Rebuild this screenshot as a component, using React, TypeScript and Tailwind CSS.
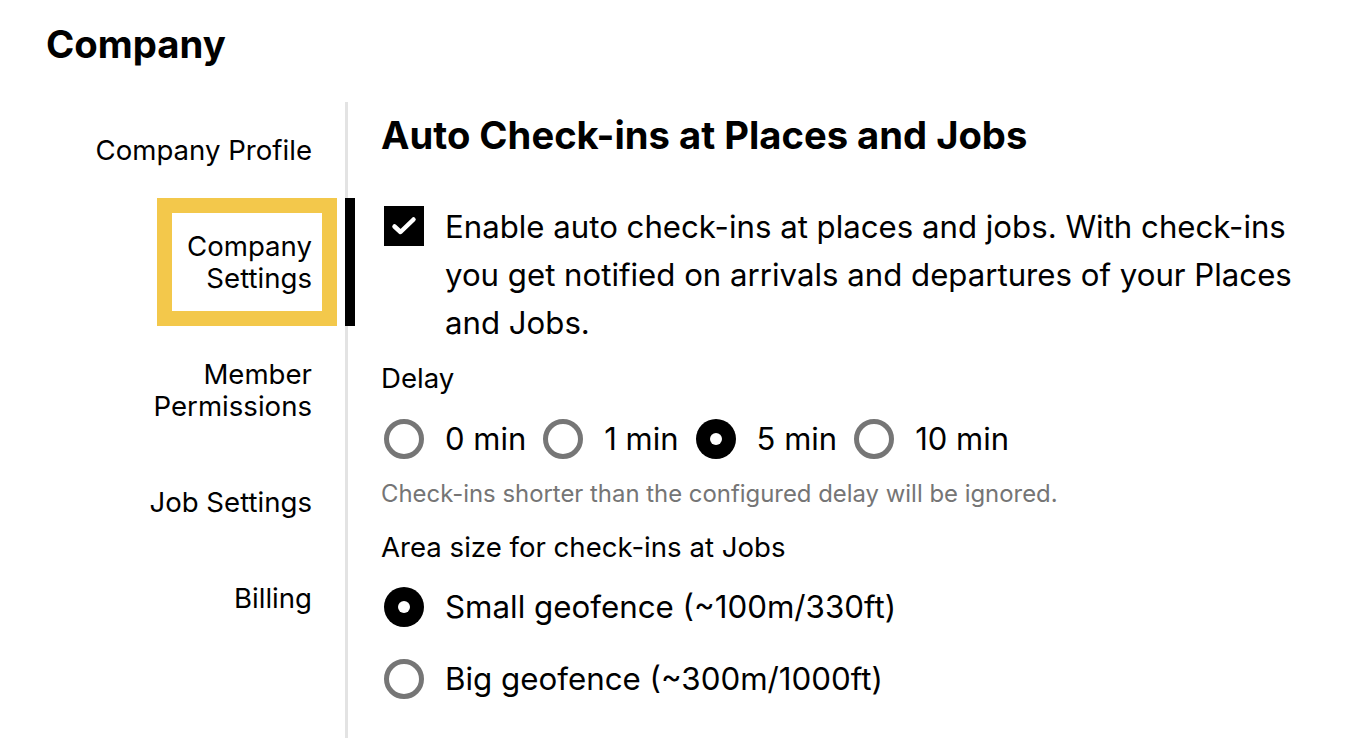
import { useState } from "react";

const NAV_ITEMS = [
  { id: "profile", label: "Company Profile" },
  { id: "settings", label: "Company Settings" },
  { id: "permissions", label: "Member Permissions" },
  { id: "jobs", label: "Job Settings" },
  { id: "billing", label: "Billing" },
];

const DELAYS = ["0 min", "1 min", "5 min", "10 min"];
const AREAS = ["Small geofence (~100m/330ft)", "Big geofence (~300m/1000ft)"];

function RadioDot({ checked }: { checked: boolean }) {
  return checked ? (
    <span className="flex h-[40px] w-[40px] shrink-0 items-center justify-center rounded-full bg-black">
      <span className="h-[12px] w-[12px] rounded-full bg-white" />
    </span>
  ) : (
    <span className="h-[40px] w-[40px] shrink-0 rounded-full border-[5px] border-[#767676] bg-white" />
  );
}

export default function App() {
  const [active] = useState("settings");
  const [enabled, setEnabled] = useState(true);
  const [delay, setDelay] = useState("5 min");
  const [area, setArea] = useState(AREAS[0]);

  return (
    <div
      className="min-h-[738px] bg-white pl-[46px] text-black"
      style={{ fontFamily: "Inter, 'Noto Sans', sans-serif" }}
    >
      <h1 className="pt-[24px] text-[38.3px] leading-[40px] font-bold">Company</h1>

      <div className="mt-[38px] flex">
        {/* side navigation */}
        <nav className="flex min-h-[636px] w-[302px] flex-col border-r-[3px] border-[#e3e3e3]">
          {NAV_ITEMS.map((item) =>
            item.id === active ? (
              <div key={item.id} className="-mr-[10px] flex justify-end border-r-[10px] border-black pr-[8px]">
                <div className="flex w-[180px] justify-end border-[15px] border-[#f3c84b] py-[17px] pr-[10px] text-right text-[27.6px] leading-[32px]">
                  <span className="max-w-[140px]">{item.label}</span>
                </div>
              </div>
            ) : (
              <div key={item.id} className="flex justify-end py-[32px] pr-[33px] text-right text-[27.6px] leading-[32px]">
                <span className="max-w-[228px]">{item.label}</span>
              </div>
            )
          )}
        </nav>

        {/* settings panel */}
        <section className="flex-1 pl-[33px]">
          <h2 className="mt-[13px] text-[38.2px] leading-[40px] font-bold">Auto Check-ins at Places and Jobs</h2>

          <label className="mt-[48px] flex cursor-pointer items-start gap-[21px]">
            <button
              type="button"
              onClick={() => setEnabled((v) => !v)}
              className="mt-[3px] ml-[3px] flex h-[40px] w-[40px] shrink-0 items-center justify-center bg-black"
            >
              {enabled && (
                <svg width="26" height="20" viewBox="0 0 26 20" fill="none">
                  <path d="M3.5 10.5l6 5.5L22.5 3.5" stroke="white" strokeWidth="4.5" strokeLinecap="round" strokeLinejoin="round" />
                </svg>
              )}
            </button>
            <span className="max-w-[870px] text-[31.2px] leading-[48px]">
              Enable auto check-ins at places and jobs. With check-ins you get notified on arrivals and departures
              of your Places and Jobs.
            </span>
          </label>

          <div className="mt-[15px] text-[27.6px] leading-[32px]">Delay</div>
          <div className="mt-[25px] flex items-center">
            {DELAYS.map((d) => (
              <button
                key={d}
                type="button"
                onClick={() => setDelay(d)}
                className="mr-[14px] ml-[3px] flex items-center gap-[21px] text-[31px] leading-[40px]"
              >
                <RadioDot checked={delay === d} />
                <span>{d}</span>
              </button>
            ))}
          </div>

          <p className="mt-[19px] text-[23.9px] leading-[32px] text-[#757575]">
            Check-ins shorter than the configured delay will be ignored.
          </p>

          <div className="mt-[21px] text-[27.6px] leading-[32px]">Area size for check-ins at Jobs</div>
          <div className="mt-[24px] flex flex-col gap-[32px]">
            {AREAS.map((a) => (
              <button
                key={a}
                type="button"
                onClick={() => setArea(a)}
                className="ml-[3px] flex items-center gap-[21px] text-left text-[31.3px] leading-[40px]"
              >
                <RadioDot checked={area === a} />
                <span>{a}</span>
              </button>
            ))}
          </div>
        </section>
      </div>
    </div>
  );
}
